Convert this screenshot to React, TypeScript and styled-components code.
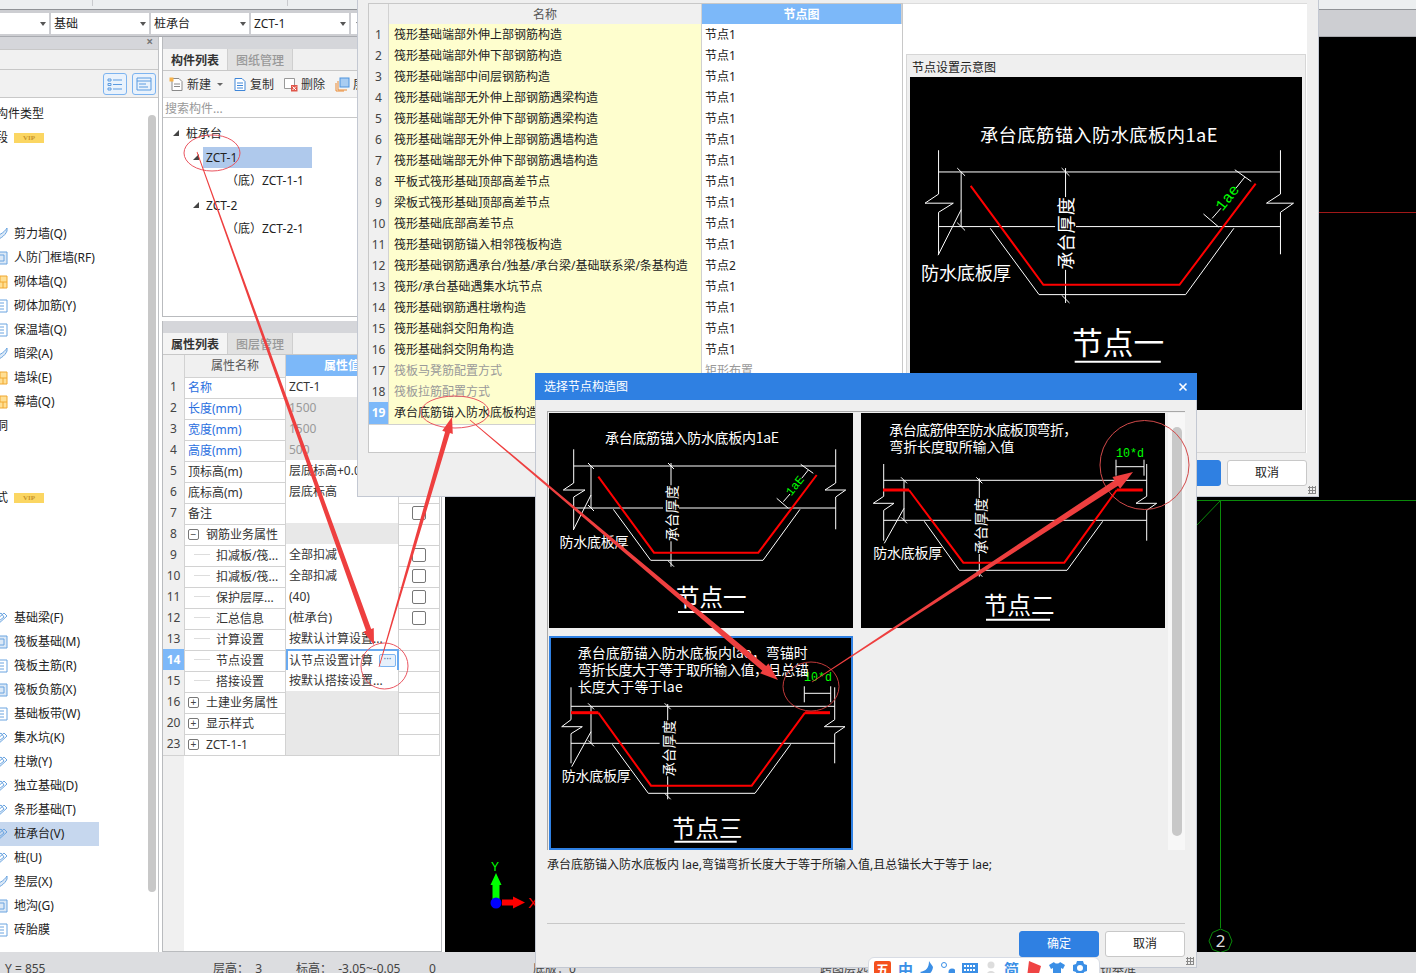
import React from "react";
import styled, { createGlobalStyle } from "styled-components";

const FONT = `"Noto Sans", "Noto Sans CJK SC", sans-serif`;

const Global = createGlobalStyle`
  html, body { margin: 0; padding: 0; width: 1416px; height: 973px; overflow: hidden; background: #dcdde0; }
  * { box-sizing: border-box; }
  body { font-family: ${FONT}; font-size: 12px; color: #222; }
`;

const Page = styled.div`
  position: relative;
  width: 1416px;
  height: 973px;
  overflow: hidden;
  display: grid;
  grid-template-rows: 37px 915px 21px;
  line-height: 16px;
`;

/* ---------- top bar ---------- */
const TopBar = styled.header`
  display: flex;
  flex-direction: column;
  background: #cdced2;
  border-bottom: 1px solid #a9abb0;
`;
const RibbonStub = styled.div`
  height: 10px;
  background: #eceff0;
  border-bottom: 1px solid #8f9296;
  display: flex;
`;
const RibbonCell = styled.div<{ $w: number }>`
  width: ${(p) => p.$w}px;
  border-right: 1px solid #c9cbce;
  height: 6px;
`;
const ComboRow = styled.div`
  display: flex;
  gap: 2px;
  padding: 3px 0 0 0;
`;
const Combo = styled.div<{ $w: number }>`
  width: ${(p) => p.$w}px;
  height: 21px;
  background: #fff;
  padding-left: 3px;
  line-height: 22px;
  position: relative;
  &::after {
    content: "";
    position: absolute;
    right: 3px;
    top: 9px;
    border: 3.5px solid transparent;
    border-top: 4px solid #555;
    border-bottom: 0;
  }
`;

/* ---------- workspace ---------- */
const Workspace = styled.main`
  display: grid;
  grid-template-columns: 159px 3px 280px 3px 1fr;
  background: #fff;
  min-height: 0;
`;
const Side = styled.aside`
  display: flex;
  flex-direction: column;
  border-right: 1px solid #bfc1c4;
  background: #fff;
  overflow: hidden;
`;
const PanelCaption = styled.div`
  height: 12px;
  background: #d5d6da;
  text-align: right;
  padding-right: 5px;
  font-size: 12px;
  line-height: 10px;
  color: #777;
  font-weight: 700;
  flex: none;
`;
const SideStrip = styled.div`
  height: 21px;
  background: #f1f1f1;
  border-top: 1px solid #c8c8c8;
  border-bottom: 1px solid #c8c8c8;
  flex: none;
`;
const SideTools = styled.div`
  height: 28px;
  background: #f1f1f1;
  border-bottom: 1px solid #c8c8c8;
  display: flex;
  justify-content: flex-end;
  align-items: center;
  gap: 5px;
  padding-right: 2px;
  flex: none;
`;
const ViewBtn = styled.div`
  width: 24px;
  height: 22px;
  border: 1px solid #7db4f0;
  border-radius: 3px;
  background: #e9f2fc;
  display: flex;
  align-items: center;
  justify-content: center;
`;
const SideBody = styled.div`
  flex: 1;
  display: flex;
  min-height: 0;
`;
const NavList = styled.div`
  width: 146px;
  padding-top: 4px;
  overflow: hidden;
`;
const NavRow = styled.div<{ $active?: boolean }>`
  height: 24px;
  width: 99px;
  display: flex;
  align-items: center;
  white-space: nowrap;
  background: ${(p) => (p.$active ? "#c6d7ee" : "transparent")};
`;
const NavHead = styled(NavRow)`
  margin-left: -4px;
  width: 140px;
`;
const NavHeadShort = styled.span`
  margin-left: -12px;
`;
const NavIcon = styled.span`
  width: 8px;
  margin-right: 6px;
  flex: none;
  display: flex;
  overflow: hidden;
  justify-content: flex-end;
  & > svg { flex: none; }
`;
const Vip = styled.span`
  margin-left: 6px;
  width: 30px;
  height: 10px;
  background: #fbd662;
  color: #c7942a;
  font: 700 7px/10px "Liberation Serif", serif;
  text-align: center;
`;
const SideScroll = styled.div`
  width: 12px;
  padding: 17px 2px 60px 2px;
  display: flex;
  & > div {
    flex: 1;
    background: #c8c8c8;
    border-radius: 4px;
  }
`;
const Gutter = styled.div`
  background: #fff;
`;

/* ---------- middle panel ---------- */
const Middle = styled.section`
  display: flex;
  flex-direction: column;
  min-height: 0;
  background: #fff;
`;
const UpperPane = styled.div`
  height: 280px;
  display: flex;
  flex-direction: column;
  border: solid #b9bbbe;
  border-width: 0 1px 1px 1px;
  flex: none;
`;
const LowerPane = styled.div`
  flex: 1;
  display: flex;
  flex-direction: column;
  border: solid #b9bbbe;
  border-width: 0 1px 1px 1px;
  min-height: 0;
  margin-top: 4px;
`;
const Tabs = styled.div`
  height: 22px;
  display: flex;
  background: #f0f0f0;
  border-bottom: 1px solid #c8c8c8;
  flex: none;
`;
const Tab = styled.div<{ $active?: boolean }>`
  width: 65px;
  text-align: center;
  line-height: 24px;
  font-weight: ${(p) => (p.$active ? 700 : 500)};
  color: ${(p) => (p.$active ? "#333" : "#999")};
  background: ${(p) => (p.$active ? "#f4f4f4" : "#e1e1e1")};
  border-right: 1px solid #cfcfcf;
`;
const Tools = styled.div`
  height: 27px;
  display: flex;
  align-items: center;
  padding: 1px 0 0 6px;
  gap: 4px;
  background: #f4f4f4;
  border-bottom: 1px solid #ddd;
  white-space: nowrap;
  overflow: hidden;
  flex: none;
`;
const ToolItem = styled.span<{ $w: number }>`
  display: inline-flex;
  align-items: center;
  gap: 3px;
  width: ${(p) => p.$w}px;
  color: #333;
  flex: none;
  & > svg { flex: none; }
`;
const SmallCaret = styled.i`
  border: 3px solid transparent;
  border-top: 3px solid #666;
  border-bottom: 0;
  margin-left: 3px;
`;
const Search = styled.div`
  height: 20px;
  padding-left: 2px;
  color: #999;
  line-height: 22px;
  border-bottom: 1px solid #c8c8c8;
  flex: none;
`;
const Tree = styled.div`
  padding-top: 3px;
  flex: 1;
`;
const TreeRow = styled.div<{ $indent: number }>`
  height: 24px;
  display: flex;
  align-items: center;
  padding-left: ${(p) => p.$indent}px;
  white-space: nowrap;
  color: #222;
`;
const TreeLabel = styled.span<{ $sel?: boolean }>`
  display: inline-block;
  height: 21px;
  line-height: 21px;
  padding-left: 3px;
  width: ${(p) => (p.$sel ? "109px" : "auto")};
  background: ${(p) => (p.$sel ? "#afc9ec" : "transparent")};
`;
const Tri = styled.i`
  width: 0;
  height: 0;
  border-style: solid;
  border-width: 0 0 6px 6px;
  border-color: transparent transparent #444 transparent;
  margin-right: 4px;
`;

/* property grid */
const PropGrid = styled.div`
  flex: 1;
  display: flex;
  flex-direction: column;
  min-height: 0;
  background: linear-gradient(90deg, #f0f0f0 21px, #fff 21px);
`;
const PropRow = styled.div`
  display: grid;
  grid-template-columns: 22px 101px 113px 41px;
  height: 21px;
  flex: none;
`;
const NumCell = styled.div<{ $sel?: boolean }>`
  background: ${(p) => (p.$sel ? "#7cb8f9" : "#f0f0f0")};
  color: ${(p) => (p.$sel ? "#fff" : "#444")};
  font-weight: ${(p) => (p.$sel ? 700 : 400)};
  border: solid #d2d2d2;
  border-width: 0 1px 1px 0;
  text-align: center;
  line-height: 22px;
  font-size: 12px;
`;
const HeadCell = styled.div<{ $blue?: boolean }>`
  background: ${(p) => (p.$blue ? "#7cb8f9" : "#f0f0f0")};
  color: ${(p) => (p.$blue ? "#fff" : "#555")};
  font-weight: ${(p) => (p.$blue ? 700 : 400)};
  border: solid #d2d2d2;
  border-width: 0 1px 1px 0;
  text-align: center;
  line-height: 22px;
  white-space: nowrap;
`;
const NameCell = styled.div<{ $blue?: boolean; $child?: boolean }>`
  border: solid #d2d2d2;
  border-width: 0 1px 1px 0;
  line-height: 20px;
  padding: 1px 0 0 ${(p) => (p.$child ? 31 : 3)}px;
  color: ${(p) => (p.$blue ? "#2a6fe0" : "#333")};
  white-space: nowrap;
  overflow: hidden;
  display: flex;
  align-items: center;
  position: relative;
  &::before {
    content: ${(p) => (p.$child ? '""' : "none")};
    position: absolute;
    left: 9px;
    top: 10px;
    width: 16px;
    border-top: 1px solid #ddd;
  }
`;
const ValCell = styled.div<{ $gray?: boolean; $muted?: boolean; $edit?: boolean }>`
  background: ${(p) => (p.$gray ? "#e8e8e8" : "#fff")};
  color: ${(p) => (p.$muted ? "#999" : "#333")};
  border: solid #d2d2d2;
  border-width: 0 1px 1px 0;
  padding-left: 3px;
  line-height: 22px;
  white-space: nowrap;
  overflow: hidden;
  position: relative;
  ${(p) =>
    p.$edit
      ? "border: 2px solid #6aaaf0; line-height: 17px; padding-left: 1px; display:flex; justify-content:space-between; align-items:center; padding-right:1px;"
      : ""}
`;
const ChkCell = styled.div`
  border: solid #d2d2d2;
  border-width: 0 1px 1px 0;
  display: flex;
  align-items: center;
  justify-content: center;
`;
const Chk = styled.i`
  width: 14px;
  height: 14px;
  border: 1px solid #777;
  border-radius: 2px;
  background: #fff;
`;
const Expander = styled.i`
  width: 11px;
  height: 11px;
  border: 1px solid #777;
  border-radius: 2px;
  margin: 0 7px 0 0;
  font: 400 10px/9px "Liberation Sans", sans-serif;
  text-align: center;
  color: #444;
  flex: none;
`;
const MoreBtn = styled.span`
  width: 17px;
  height: 13px;
  border: 1px solid #7db4f0;
  border-radius: 2px;
  background: #e6f0fb;
  color: #5b7fa8;
  font-size: 10px;
  line-height: 7px;
  text-align: center;
  letter-spacing: 0;
  flex: none;
`;

/* canvas */
const Canvas = styled.div`
  background: #000;
  overflow: hidden;
  & > svg { display: block; }
`;

/* status bar */
const Status = styled.footer`
  background: #dcdde0;
  display: flex;
  align-items: flex-start;
  padding-top: 9px;
  color: #444;
  white-space: nowrap;
  line-height: 16px;
  overflow: hidden;
`;
const StatusItem = styled.span<{ $w: number }>`
  width: ${(p) => p.$w}px;
  flex: none;
`;
const StatusFirst = styled(StatusItem)`
  padding-left: 5px;
`;

/* ---------- dialogs ---------- */
const DialogA = styled.section`
  position: absolute;
  left: 357px;
  top: -1px;
  width: 962px;
  height: 498px;
  background: #efefef;
  border: 1px solid #c3c8d2;
  padding: 3px 11px 0 10px;
  display: flex;
  flex-direction: column;
`;
const DialogAMain = styled.div`
  display: grid;
  grid-template-columns: 535px 404px;
  height: 450px;
  flex: none;
`;
const NodeTable = styled.div`
  background: #fff;
  border: 1px solid #c8c8c8;
  display: flex;
  flex-direction: column;
`;
const NodeRow = styled.div`
  display: grid;
  grid-template-columns: 20px 313px 200px;
  height: 21px;
  flex: none;
  &:first-child { height: 20px; }
`;
const NodeName = styled.div<{ $muted?: boolean }>`
  background: #fefece;
  color: ${(p) => (p.$muted ? "#999" : "#222")};
  border: solid #d0d0d0;
  border-width: 0 1px 1px 0;
  padding-left: 5px;
  line-height: 22px;
  white-space: nowrap;
  overflow: hidden;
`;
const NodeVal = styled.div<{ $muted?: boolean }>`
  background: #fff;
  color: ${(p) => (p.$muted ? "#999" : "#222")};
  border-bottom: 1px solid #d0d0d0;
  padding-left: 3px;
  line-height: 22px;
`;
const PreviewCol = styled.div`
  display: flex;
  flex-direction: column;
  background: #fff;
  border: solid #dcdcdc;
  border-width: 1px 0 0 0;
`;
const PreviewTop = styled.div`
  height: 50px;
  flex: none;
`;
const PreviewGroup = styled.div`
  flex: 1;
  background: #efefef;
  border: 1px solid #d6d6d6;
  margin: 0 1px 0 3px;
  padding: 4px 3px 0;
  min-height: 0;
  & > svg { display: block; background: #000; }
`;
const PreviewGap = styled.div`
  height: 0;
`;
const GroupLabel = styled.div`
  height: 18px;
  padding-left: 2px;
  line-height: 18px;
  color: #222;
`;
const DialogAFoot = styled.div`
  display: flex;
  justify-content: flex-end;
  gap: 6px;
  padding-top: 7px;
`;
const Btn = styled.button<{ $primary?: boolean }>`
  width: 80px;
  height: 26px;
  border-radius: 3px;
  font: 400 12px/24px ${FONT};
  background: ${(p) => (p.$primary ? "#2f80e2" : "#fff")};
  color: ${(p) => (p.$primary ? "#fff" : "#222")};
  border: 1px solid ${(p) => (p.$primary ? "#2f80e2" : "#c8c8c8")};
  padding: 0;
`;
const Grip = styled.div`
  position: absolute;
  right: 2px;
  bottom: 2px;
  width: 8px;
  height: 8px;
  background: radial-gradient(circle, #888 1px, transparent 1.2px) 0 0 / 3px 3px;
`;

const DialogB = styled.section`
  position: absolute;
  left: 535px;
  top: 373px;
  width: 662px;
  height: 595px;
  background: #efefef;
  border: solid #c3c8d2;
  border-width: 0 1px 1px 1px;
  display: flex;
  flex-direction: column;
`;
const TitleBar = styled.div`
  height: 27px;
  background: #2f80e2;
  color: #fff;
  display: flex;
  align-items: center;
  justify-content: space-between;
  padding: 0 9px 0 9px;
  margin: 0 -1px;
  flex: none;
`;
const DialogBBody = styled.div`
  flex: 1;
  display: flex;
  flex-direction: column;
  padding: 11px 11px 10px 11px;
  min-height: 0;
`;
const ListFrame = styled.div`
  height: 439px;
  display: flex;
  border: solid #a8a8a8;
  border-width: 1px 0 0 1px;
  flex: none;
  padding: 1px 0 0 1px;
`;
const Gallery = styled.div`
  width: 619px;
  display: grid;
  grid-template-columns: 304px 304px;
  grid-template-rows: 215px 214px;
  gap: 8px;
  flex: none;
`;
const Thumb = styled.div<{ $sel?: boolean }>`
  background: #000;
  border: ${(p) => (p.$sel ? "2px solid #2f80e2" : "0")};
  & > svg { display: block; }
`;
const ListScroll = styled.div`
  flex: 1;
  background: #f7f7f7;
  padding: 14px 3px 14px 4px;
  display: flex;
  & > div {
    flex: 1;
    background: #c8c8c8;
    border-radius: 5px;
  }
`;
const Desc = styled.div`
  margin-top: 7px;
  height: 16px;
  color: #222;
  white-space: nowrap;
  flex: none;
`;
const FootB = styled.div`
  margin-top: auto;
  border-top: 1px solid #c8c8c8;
  padding-top: 7px;
  display: flex;
  justify-content: flex-end;
  gap: 6px;
  flex: none;
`;

/* IME */
const Ime = styled.div`
  position: absolute;
  left: 868px;
  top: 957px;
  width: 232px;
  height: 20px;
  background: #fff;
  border: 1px solid #d8dce4;
  border-radius: 6px 6px 0 0;
  display: flex;
  gap: 7px;
  padding: 3px 0 0 5px;
  color: #3b8fe6;
  font-weight: 700;
  font-size: 15px;
  line-height: 16px;
`;
const ImeTile = styled.span`
  width: 17px;
  height: 17px;
  background: #f4511e;
  color: #fff;
  border-radius: 2px;
  text-align: center;
  font-size: 13px;
`;

const Overlay = styled.svg`
  position: absolute;
  left: 0;
  top: 0;
  pointer-events: none;
`;

/* ---------- data ---------- */
type Pt = [number, number];
const path = (p: Pt[]) => p.map((q) => q.join(",")).join(" ");

type Variant = {
  top: number;
  bot: number;
  lx: number;
  rx: number;
  v0: number;
  v1: number;
  zig: number;
  lzig: [number, number];
  rzig: [number, number];
  red: Pt[];
  outer: Pt[];
  dimX: number;
  leader: [Pt, Pt];
  cx: number;
  cy0: number;
  cy1: number;
  cText: Pt;
  labelAt: Pt;
  title: { t: string; x: number; y: number; w: number }[];
  head: { t: string; x: number; y: number; ux0: number; ux1: number; uy: number };
  slope?: string;
  bend?: { x0: number; x1: number; y: number; tx: number; ty: number };
};

const V1: Variant = {
  top: 53, bot: 95, lx: 24.7, rx: 286.7, v0: 36.3, v1: 116.3, zig: 77,
  lzig: [14.3, 36], rzig: [276, 296.7],
  red: [[49.3, 63.7], [105, 139.7], [209.3, 139.7], [267.7, 62]],
  outer: [[64.3, 96.3], [101.7, 147.3], [214, 147.3], [251, 96.3]],
  dimX: 42, leader: [[42, 82], [24.3, 117]],
  cx: 122, cy0: 50, cy1: 153.7, cText: [122.7, 100.3],
  labelAt: [10.5, 134],
  title: [{ t: "承台底筋锚入防水底板内1aE", x: 56, y: 30, w: 174 }],
  head: { t: "节点一", x: 127, y: 193, ux0: 129, ux1: 195, uy: 199 },
  slope: "1aE",
};
const V1Big: Variant = {
  ...V1,
  labelAt: [11.2, 136],
  title: [{ t: "承台底筋锚入防水底板内1aE", x: 56.4, y: 30, w: 182 }],
  slope: "1ae",
};
const V2: Variant = {
  top: 67.3, bot: 107.3, lx: 22.7, rx: 285.7, v0: 51, v1: 127.7, zig: 90.3,
  lzig: [12.3, 33], rzig: [275, 295.7],
  red: [[22, 77], [48, 77], [102.3, 149.7], [203.3, 149.7], [255.7, 77], [281.7, 77]],
  outer: [[63.3, 108.3], [98.3, 157.3], [206, 157.3], [241.7, 108.3]],
  dimX: 43, leader: [[43, 95.3], [23.3, 130.3]],
  cx: 118.3, cy0: 65.3, cy1: 163.7, cText: [120, 113],
  labelAt: [12.3, 145],
  title: [
    { t: "承台底筋伸至防水底板顶弯折，", x: 28.3, y: 21.7, w: 188 },
    { t: "弯折长度取所输入值", x: 28.3, y: 38.7, w: 125 },
  ],
  head: { t: "节点二", x: 123, y: 201, ux0: 125, ux1: 189, uy: 206.7 },
  bend: { x0: 255, x1: 283, y: 53.7, tx: 255, ty: 44.3 },
};
const V3: Variant = {
  top: 68.3, bot: 105.3, lx: 20, rx: 283.7, v0: 49.3, v1: 125.3, zig: 88.7,
  lzig: [10.7, 31.3], rzig: [273.3, 294],
  red: [[20, 74.7], [47.3, 74.7], [100, 147.7], [200.7, 147.7], [254, 74.7], [279, 74.7]],
  outer: [[61.3, 106.3], [97.3, 155.3], [204, 155.3], [239.7, 106.3]],
  dimX: 40, leader: [[40, 93.7], [20.7, 128.7]],
  cx: 116.7, cy0: 66, cy1: 161.3, cText: [118.3, 110.3],
  labelAt: [10.7, 143],
  title: [
    { t: "承台底筋锚入防水底板内lae，弯锚时", x: 26.7, y: 20.3, w: 230 },
    { t: "弯折长度大于等于取所输入值，且总锚", x: 26.7, y: 37, w: 231 },
    { t: "长度大于等于lae", x: 26.7, y: 54.3, w: 105 },
  ],
  head: { t: "节点三", x: 121, y: 199, ux0: 123.3, ux1: 185.7, uy: 203.7 },
  bend: { x0: 253.3, x1: 279.7, y: 55.3, tx: 253, ty: 42.7 },
};

const Wline: React.FC<{ p: Pt[]; c?: string; w?: number }> = ({ p, c = "#fff", w = 1 }) => (
  <polyline points={path(p)} fill="none" stroke={c} strokeWidth={w} vectorEffect="non-scaling-stroke" />
);

const CAD = `"Noto Sans CJK SC", sans-serif`;
const MONO = `"Liberation Mono", monospace`;

const Diagram: React.FC<{ v: Variant; w: number; h: number; box: string }> = ({ v, w, h, box }) => {
  const tick = (x: number, y: number): Pt[] => [[x - 3, y - 3], [x + 3, y + 3]];
  const gap = 8;
  const gy = v.bot;
  const ry = v.red;
  return (
    <svg width={w} height={h} viewBox={box} preserveAspectRatio="none">
      <Wline p={[[v.lx, v.top], [v.rx, v.top]]} />
      <Wline p={[[v.lx, gy], [v.cx - gap, gy]]} />
      <Wline p={[[v.cx + gap, gy], [v.rx, gy]]} />
      <Wline p={[[v.lx, v.v0], [v.lx, v.zig - 7], [v.lzig[0], v.zig], [v.lzig[1], v.zig], [v.lx, v.zig + 7], [v.lx, v.v1]]} />
      <Wline p={[[v.rx, v.v0], [v.rx, v.zig - 7], [v.rzig[0], v.zig], [v.rzig[1], v.zig], [v.rx, v.zig + 7], [v.rx, v.v1]]} />
      <Wline p={[[v.dimX, v.top], [v.dimX, v.bot]]} />
      <Wline p={tick(v.dimX, v.top)} />
      <Wline p={tick(v.dimX, v.bot)} />
      <Wline p={v.leader} />
      <Wline p={[[v.cx, v.cy0], [v.cx, v.cText[1] - 28]]} />
      <Wline p={[[v.cx, v.cText[1] + 28], [v.cx, v.cy1]]} />
      <Wline p={tick(v.cx, v.top)} />
      <Wline p={tick(v.cx, v.cy1 - 3)} />
      <Wline p={v.outer} />
      {v.bend ? <Wline p={ry.slice(1, 5)} c="#f00" w={2} /> : <Wline p={ry} c="#f00" w={2} />}
      {v.bend && <Wline p={ry.slice(4)} c="#f00" w={3} />}
      {v.bend && <Wline p={ry.slice(0, 2)} c="#f00" w={3} />}
      {v.slope && (
        <>
          <Wline p={[[234.3, 88.7], [241, 81]]} />
          <Wline p={[[252.7, 65.3], [259.3, 57]]} />
          <Wline p={[[227.7, 85.3], [239.3, 95.3]]} />
          <Wline p={[[251.7, 51.3], [264.3, 60.3]]} />
          <text
            transform="translate(249 75) rotate(-52)"
            fill="#0f0"
            fontFamily={MONO}
            fontSize={12}
            textAnchor="middle"
          >
            {v.slope}
          </text>
        </>
      )}
      {v.bend && (
        <>
          <Wline p={[[v.bend.x0, v.bend.y], [v.bend.x1, v.bend.y]]} />
          <Wline p={[[v.bend.x0, v.bend.y - 7], [v.bend.x0, v.bend.y + 9]]} />
          <Wline p={[[v.bend.x1, v.bend.y - 7], [v.bend.x1, v.bend.y + 9]]} />
          <text x={v.bend.tx} y={v.bend.ty} fill="#0f0" fontFamily={MONO} fontSize={13} textLength={28} lengthAdjust="spacingAndGlyphs">
            10*d
          </text>
        </>
      )}
      {v.title.map((l) => (
        <text key={l.t} x={l.x} y={l.y} fill="#fff" fontFamily={CAD} fontSize={14} textLength={l.w} lengthAdjust="spacing">
          {l.t}
        </text>
      ))}
      <text x={v.labelAt[0]} y={v.labelAt[1]} fill="#fff" fontFamily={CAD} fontSize={14} textLength={69}>
        防水底板厚
      </text>
      <text
        transform={`translate(${v.cText[0] + 5} ${v.cText[1]}) rotate(-90)`}
        fill="#fff"
        fontFamily={CAD}
        fontSize={14}
        textAnchor="middle"
      >
        承台厚度
      </text>
      <text x={v.head.x} y={v.head.y} fill="#fff" fontFamily={CAD} fontSize={23.5}>
        {v.head.t}
      </text>
      <Wline p={[[v.head.ux0, v.head.uy], [v.head.ux1, v.head.uy]]} w={2} />
    </svg>
  );
};

const NODE_ROWS: [string, string, boolean?][] = [
  ["筏形基础端部外伸上部钢筋构造", "节点1"],
  ["筏形基础端部外伸下部钢筋构造", "节点1"],
  ["筏形基础端部中间层钢筋构造", "节点1"],
  ["筏形基础端部无外伸上部钢筋遇梁构造", "节点1"],
  ["筏形基础端部无外伸下部钢筋遇梁构造", "节点1"],
  ["筏形基础端部无外伸上部钢筋遇墙构造", "节点1"],
  ["筏形基础端部无外伸下部钢筋遇墙构造", "节点1"],
  ["平板式筏形基础顶部高差节点", "节点1"],
  ["梁板式筏形基础顶部高差节点", "节点1"],
  ["筏形基础底部高差节点", "节点1"],
  ["筏形基础钢筋锚入相邻筏板构造", "节点1"],
  ["筏形基础钢筋遇承台/独基/承台梁/基础联系梁/条基构造", "节点2"],
  ["筏形/承台基础遇集水坑节点", "节点1"],
  ["筏形基础钢筋遇柱墩构造", "节点1"],
  ["筏形基础斜交阳角构造", "节点1"],
  ["筏形基础斜交阴角构造", "节点1"],
  ["筏板马凳筋配置方式", "矩形布置", true],
  ["筏板拉筋配置方式", "", true],
  ["承台底筋锚入防水底板构造", "节点1"],
];

type IconKind = "wall" | "frame" | "brick" | "grid" | "bar";
type NavItem =
  | { kind: "head"; t: string; vip?: boolean }
  | { kind: "item"; t: string; icon: IconKind; active?: boolean }
  | { kind: "gap" };

const NAV: NavItem[] = [
  { kind: "head", t: "构件类型" },
  { kind: "head", t: "梁段", vip: true },
  { kind: "gap" }, { kind: "gap" }, { kind: "gap" },
  { kind: "item", t: "剪力墙(Q)", icon: "wall" },
  { kind: "item", t: "人防门框墙(RF)", icon: "frame" },
  { kind: "item", t: "砌体墙(Q)", icon: "brick" },
  { kind: "item", t: "砌体加筋(Y)", icon: "grid" },
  { kind: "item", t: "保温墙(Q)", icon: "grid" },
  { kind: "item", t: "暗梁(A)", icon: "wall" },
  { kind: "item", t: "墙垛(E)", icon: "brick" },
  { kind: "item", t: "幕墙(Q)", icon: "brick" },
  { kind: "head", t: "门洞" },
  { kind: "gap" }, { kind: "gap" },
  { kind: "head", t: "样式", vip: true },
  { kind: "gap" }, { kind: "gap" }, { kind: "gap" }, { kind: "gap" },
  { kind: "item", t: "基础梁(F)", icon: "bar" },
  { kind: "item", t: "筏板基础(M)", icon: "frame" },
  { kind: "item", t: "筏板主筋(R)", icon: "grid" },
  { kind: "item", t: "筏板负筋(X)", icon: "frame" },
  { kind: "item", t: "基础板带(W)", icon: "grid" },
  { kind: "item", t: "集水坑(K)", icon: "bar" },
  { kind: "item", t: "柱墩(Y)", icon: "bar" },
  { kind: "item", t: "独立基础(D)", icon: "bar" },
  { kind: "item", t: "条形基础(T)", icon: "bar" },
  { kind: "item", t: "桩承台(V)", icon: "bar", active: true },
  { kind: "item", t: "桩(U)", icon: "bar" },
  { kind: "item", t: "垫层(X)", icon: "wall" },
  { kind: "item", t: "地沟(G)", icon: "frame" },
  { kind: "item", t: "砖胎膜", icon: "grid" },
];

const NavGlyph: React.FC<{ k: IconKind }> = ({ k }) => {
  const c = k === "brick" ? "#f0a830" : "#6aa4e0";
  return (
    <svg width="14" height="16" viewBox="0 0 14 16">
      {k === "wall" && <path d="M0 14C5 14 11 10 13 5V2C10 7 4 10 0 10Z" fill="#dbe8f6" stroke={c} />}
      {k === "frame" && <path d="M0 2H13V14H0M0 5H10V11H0" fill="#dbe8f6" stroke={c} />}
      {k === "brick" && <path d="M0 2H13V14H0M0 8H13M6 2V8M9 8V14" fill="#ffdf94" stroke={c} />}
      {k === "grid" && <path d="M0 2H13V14H0M0 5H10M0 8H10M0 11H10" fill="none" stroke={c} />}
      {k === "bar" && <path d="M0 12L10 3 13 6 3 15M2 7L7 3 10 7 5 11" fill="none" stroke={c} />}
    </svg>
  );
};

type Prop = {
  n: string; name: string; val?: string; blue?: boolean; gray?: boolean; muted?: boolean;
  child?: boolean; exp?: "+" | "-"; chk?: boolean; edit?: boolean;
};
const PROPS: Prop[] = [
  { n: "1", name: "名称", val: "ZCT-1", blue: true },
  { n: "2", name: "长度(mm)", val: "1500", blue: true, gray: true, muted: true },
  { n: "3", name: "宽度(mm)", val: "1500", blue: true, gray: true, muted: true },
  { n: "4", name: "高度(mm)", val: "500", blue: true, gray: true, muted: true },
  { n: "5", name: "顶标高(m)", val: "层底标高+0.05" },
  { n: "6", name: "底标高(m)", val: "层底标高" },
  { n: "7", name: "备注", chk: true },
  { n: "8", name: "钢筋业务属性", exp: "-", gray: true },
  { n: "9", name: "扣减板/筏...", val: "全部扣减", child: true, chk: true },
  { n: "10", name: "扣减板/筏...", val: "全部扣减", child: true, chk: true },
  { n: "11", name: "保护层厚...", val: "(40)", child: true, chk: true },
  { n: "12", name: "汇总信息", val: "(桩承台)", child: true, chk: true },
  { n: "13", name: "计算设置", val: "按默认计算设置...", child: true },
  { n: "14", name: "节点设置", val: "认节点设置计算", child: true, edit: true },
  { n: "15", name: "搭接设置", val: "按默认搭接设置...", child: true },
  { n: "16", name: "土建业务属性", exp: "+", gray: true },
  { n: "20", name: "显示样式", exp: "+", gray: true },
  { n: "23", name: "ZCT-1-1", exp: "+", gray: true },
];

function taper(a: Pt, b: Pt, w0: number, w1: number, hw: number, hl: number) {
  const dx = b[0] - a[0], dy = b[1] - a[1];
  const l = Math.hypot(dx, dy);
  const ux = dx / l, uy = dy / l, nx = -uy, ny = ux;
  const bx = b[0] - ux * hl, by = b[1] - uy * hl;
  const pts: Pt[] = [
    [a[0] + (nx * w0) / 2, a[1] + (ny * w0) / 2],
    [bx + (nx * w1) / 2, by + (ny * w1) / 2],
    [bx + (nx * hw) / 2, by + (ny * hw) / 2],
    b,
    [bx - (nx * hw) / 2, by - (ny * hw) / 2],
    [bx - (nx * w1) / 2, by - (ny * w1) / 2],
    [a[0] - (nx * w0) / 2, a[1] - (ny * w0) / 2],
  ];
  return path(pts);
}

const App: React.FC = () => (
  <>
    <Global />
    <Page>
      <TopBar>
        <RibbonStub>
          <RibbonCell $w={93} />
          <RibbonCell $w={195} />
        </RibbonStub>
        <ComboRow>
          <Combo $w={49} />
          <Combo $w={98}>基础</Combo>
          <Combo $w={98}>桩承台</Combo>
          <Combo $w={98}>ZCT-1</Combo>
          <Combo $w={14} />
        </ComboRow>
      </TopBar>

      <Workspace>
        <Side>
          <PanelCaption>×</PanelCaption>
          <SideStrip />
          <SideTools>
            <ViewBtn>
              <svg width="16" height="14" viewBox="0 0 16 14" fill="none" stroke="#5b9be0">
                <path d="M1 2h3v2H1zM6 3h9M1 6.500h3v2H1zM6 7.500h9M1 11h3v2H1zM6 12h9" />
              </svg>
            </ViewBtn>
            <ViewBtn>
              <svg width="16" height="14" viewBox="0 0 16 14" fill="none" stroke="#5b9be0">
                <path d="M1 1h14v12H1zM1 4h14" />
                <path d="M3 7h7M3 10h9" />
              </svg>
            </ViewBtn>
          </SideTools>
          <SideBody>
            <NavList>
              {NAV.map((n, i) =>
                n.kind === "gap" ? (
                  <NavRow key={i} />
                ) : n.kind === "head" ? (
                  <NavHead key={i}>
                    {n.t.length === 2 ? <NavHeadShort>{n.t}</NavHeadShort> : n.t}
                    {n.vip && <Vip>VIP</Vip>}
                  </NavHead>
                ) : (
                  <NavRow key={i} $active={n.active}>
                    <NavIcon>
                      <NavGlyph k={n.icon} />
                    </NavIcon>
                    {n.t}
                  </NavRow>
                )
              )}
            </NavList>
            <SideScroll>
              <div />
            </SideScroll>
          </SideBody>
        </Side>
        <Gutter />
        <Middle>
          <UpperPane>
            <PanelCaption />
            <Tabs>
              <Tab $active>构件列表</Tab>
              <Tab>图纸管理</Tab>
            </Tabs>
            <Tools>
              <ToolItem $w={60}>
                <svg width="15" height="15" viewBox="0 0 15 15" fill="#fff" stroke="#8a8a8a">
                  <path d="M3 1.500h7l3 3v9H3z" />
                  <path d="M5 7h6M5 9.500h6" />
                  <rect x="0.500" y="0.500" width="4" height="4" fill="#f6b24a" stroke="none" />
                </svg>
                新建
                <SmallCaret />
              </ToolItem>
              <ToolItem $w={46}>
                <svg width="14" height="15" viewBox="0 0 14 15" fill="#fff" stroke="#3f86d8">
                  <path d="M2 1.500h7l3 3v9H2z" />
                  <path d="M4 6h6M4 8.500h6M4 11h6" />
                </svg>
                复制
              </ToolItem>
              <ToolItem $w={48}>
                <svg width="15" height="15" viewBox="0 0 15 15" fill="#fff" stroke="#999">
                  <path d="M1.500 1.500h10v10h-10z" />
                  <rect x="8" y="8" width="6.500" height="6.500" fill="#e0564a" stroke="none" />
                  <path d="M9.500 9.500l3.500 3.500M13 9.500l-3.500 3.500" stroke="#fff" />
                </svg>
                删除
              </ToolItem>
              <ToolItem $w={80}>
                <svg width="15" height="15" viewBox="0 0 15 15" fill="none" stroke="#e98a34">
                  <rect x="5" y="1" width="9" height="9" fill="#a9cdf2" stroke="#4d93de" />
                  <path d="M3 4v9h9M1 6v8h8" />
                </svg>
                层间复制
              </ToolItem>
            </Tools>
            <Search>搜索构件...</Search>
            <Tree>
              <TreeRow $indent={10}>
                <Tri />
                <TreeLabel>桩承台</TreeLabel>
              </TreeRow>
              <TreeRow $indent={30}>
                <Tri />
                <TreeLabel $sel>ZCT-1</TreeLabel>
              </TreeRow>
              <TreeRow $indent={63}>（底）ZCT-1-1</TreeRow>
              <TreeRow $indent={30}>
                <Tri />
                <TreeLabel>ZCT-2</TreeLabel>
              </TreeRow>
              <TreeRow $indent={63}>（底）ZCT-2-1</TreeRow>
            </Tree>
          </UpperPane>
          <LowerPane>
            <PanelCaption />
            <Tabs>
              <Tab $active>属性列表</Tab>
              <Tab>图层管理</Tab>
            </Tabs>
            <PropGrid>
              <PropRow>
                <HeadCell />
                <HeadCell>属性名称</HeadCell>
                <HeadCell $blue>属性值</HeadCell>
                <HeadCell>附加</HeadCell>
              </PropRow>
              {PROPS.map((p) => (
                <PropRow key={p.n}>
                  <NumCell $sel={p.edit}>{p.n}</NumCell>
                  <NameCell $blue={p.blue} $child={p.child}>
                    {p.exp && <Expander>{p.exp === "+" ? "+" : "−"}</Expander>}
                    {p.name}
                  </NameCell>
                  <ValCell $gray={p.gray} $muted={p.muted} $edit={p.edit}>
                    {p.val}
                    {p.edit && <MoreBtn>···</MoreBtn>}
                  </ValCell>
                  <ChkCell>{p.chk && <Chk />}</ChkCell>
                </PropRow>
              ))}
            </PropGrid>
          </LowerPane>
        </Middle>
        <Gutter />
        <Canvas>
          <svg width="971" height="915" viewBox="445 37 971 915">
            <path d="M1319 212.500H1416" stroke="#a01818" />
            <path d="M1197 500.500H1416M1220.500 500V928M1197 525L1221 500" stroke="#0a8a0a" fill="none" />
            <path
              d="M1220.500 929l8 3.500 3.500 8.500-3.500 8.500-8 3-8-3-3.500-8.500 3.500-8.500z"
              fill="#000"
              stroke="#0a8a0a"
            />
            <text x="1220.500" y="947" fill="#ddd" fontSize="17" textAnchor="middle" fontFamily={FONT}>
              2
            </text>
            <path d="M496 873L501.500 885H499.500V902H492.500V885H490.500Z" fill="#0f0" />
            <path d="M502 899.500H513V896.500L525 902.500 513 908.500V905.500H502Z" fill="#f00" />
            <circle cx="496" cy="903" r="5.500" fill="#00f" />
            <text x="491" y="871" fill="#0f0" fontSize="12" fontFamily={`"Liberation Sans", sans-serif`}>
              Y
            </text>
            <text x="528" y="908" fill="#f00" fontSize="15" fontFamily={`"Liberation Sans", sans-serif`}>
              X
            </text>
          </svg>
        </Canvas>
      </Workspace>

      <Status>
        <StatusFirst $w={213}>Y = 855</StatusFirst>
        <StatusItem $w={83}>层高：&nbsp;&nbsp;3</StatusItem>
        <StatusItem $w={133}>标高：&nbsp;&nbsp;-3.05~-0.05</StatusItem>
        <StatusItem $w={104}>0</StatusItem>
        <StatusItem $w={287}>底版：0</StatusItem>
        <StatusItem $w={280}>跨图层选择</StatusItem>
        <StatusItem $w={100}>钮基准</StatusItem>
      </Status>

      <DialogA>
        <DialogAMain>
          <NodeTable>
            <NodeRow>
              <HeadCell />
              <HeadCell>名称</HeadCell>
              <HeadCell $blue>节点图</HeadCell>
            </NodeRow>
            {NODE_ROWS.map(([name, val, muted], i) => (
              <NodeRow key={i}>
                <NumCell $sel={i === 18}>{i + 1}</NumCell>
                <NodeName $muted={muted}>{name}</NodeName>
                <NodeVal $muted={muted}>{val}</NodeVal>
              </NodeRow>
            ))}
          </NodeTable>
          <PreviewCol>
            <PreviewTop />
            <PreviewGap />
            <PreviewGroup>
              <GroupLabel>节点设置示意图</GroupLabel>
              <Diagram v={V1Big} w={392} h={333} box="2.800 -20 300.400 256" />
            </PreviewGroup>
          </PreviewCol>
        </DialogAMain>
        <DialogAFoot>
          <Btn $primary>确定</Btn>
          <Btn>取消</Btn>
        </DialogAFoot>
        <Grip />
      </DialogA>

      <DialogB>
        <TitleBar>
          选择节点构造图
          <svg width="10" height="10" viewBox="0 0 10 10" stroke="#fff" strokeWidth="1.600">
            <path d="M1.500 1.500L8.500 8.500M8.500 1.500L1.500 8.500" />
          </svg>
        </TitleBar>
        <DialogBBody>
          <ListFrame>
            <Gallery>
              <Thumb>
                <Diagram v={V1} w={304} h={215} box="0 0 304 215" />
              </Thumb>
              <Thumb>
                <Diagram v={V2} w={304} h={215} box="0 0 304 215" />
              </Thumb>
              <Thumb $sel>
                <Diagram v={V3} w={300} h={210} box="0 0 300 210" />
              </Thumb>
            </Gallery>
            <ListScroll>
              <div />
            </ListScroll>
          </ListFrame>
          <Desc>承台底筋锚入防水底板内 lae,弯锚弯折长度大于等于所输入值,且总锚长大于等于 lae;</Desc>
          <FootB>
            <Btn $primary>确定</Btn>
            <Btn>取消</Btn>
          </FootB>
        </DialogBBody>
        <Grip />
      </DialogB>

      <Overlay width="1416" height="973" viewBox="0 0 1416 973">
        <g fill="none" stroke="#ea5560" strokeWidth="1">
          <ellipse cx="212" cy="153" rx="28" ry="18" />
          <ellipse cx="384.500" cy="666" rx="23.500" ry="23" />
          <ellipse cx="455" cy="412" rx="34" ry="16" />
          <ellipse cx="811" cy="686.500" rx="28" ry="24.500" stroke="#c23a3a" />
          <circle cx="1144.500" cy="465" r="44.500" stroke="#d24a4a" />
        </g>
        <g fill="#ee3f3f">
          <polygon points={taper([197, 152], [374, 645], 0.8, 5.5, 11, 16)} />
          <polygon points={taper([379, 667], [452, 417], 0.8, 5, 11, 16)} />
          <polygon points={taper([470, 420], [778, 680], 0.8, 6, 13, 18)} />
          <polygon points={taper([812, 682], [1133, 472], 0.8, 6.500, 14, 20)} />
        </g>
      </Overlay>

      <Ime>
        <ImeTile>五</ImeTile>
        <span>中</span>
        <svg width="14" height="16" viewBox="0 0 14 16" fill="#3b8fe6">
          <path d="M9 0C9 7 6 10 0 11 4 15 12 15 13 6 12 4 10 2 9 0Z" />
        </svg>
        <svg width="14" height="16" viewBox="0 0 14 16" fill="#3b8fe6">
          <circle cx="3" cy="4" r="2.500" fill="none" stroke="#3b8fe6" />
          <circle cx="11" cy="11" r="3.500" />
        </svg>
        <svg width="16" height="16" viewBox="0 0 16 16" fill="#3b8fe6">
          <path d="M0 2h16v14H0zM2 4v2h2V4zm3 0v2h2V4zm3 0v2h2V4zm3 0v2h2V4zM2 8v2h2V8zm3 0v2h2V8zm3 0v2h2V8zm3 0v2h2V8z" fillRule="evenodd" />
        </svg>
        <svg width="12" height="16" viewBox="0 0 12 16" fill="#ddd">
          <circle cx="6" cy="4" r="3.500" />
          <path d="M1 16c0-8 10-8 10 0z" />
        </svg>
        <span>简</span>
        <svg width="16" height="16" viewBox="0 0 16 16" fill="#ef4444">
          <path d="M3 0L15 5 12 16H1z" />
        </svg>
        <svg width="16" height="16" viewBox="0 0 16 16" fill="#3b8fe6">
          <path d="M5 1L0 4l2 4 2-1v9h8V7l2 1 2-4-5-3c-1 2-5 2-6 0z" />
        </svg>
        <svg width="16" height="16" viewBox="0 0 16 16" fill="#3b8fe6">
          <path d="M5 0h6l1 3 3 1v6l-3 1-1 3H5l-1-3-3-1V4l3-1zM8 4a3 3 0 100 6 3 3 0 000-6z" fillRule="evenodd" />
        </svg>
      </Ime>
    </Page>
  </>
);

export default App;
